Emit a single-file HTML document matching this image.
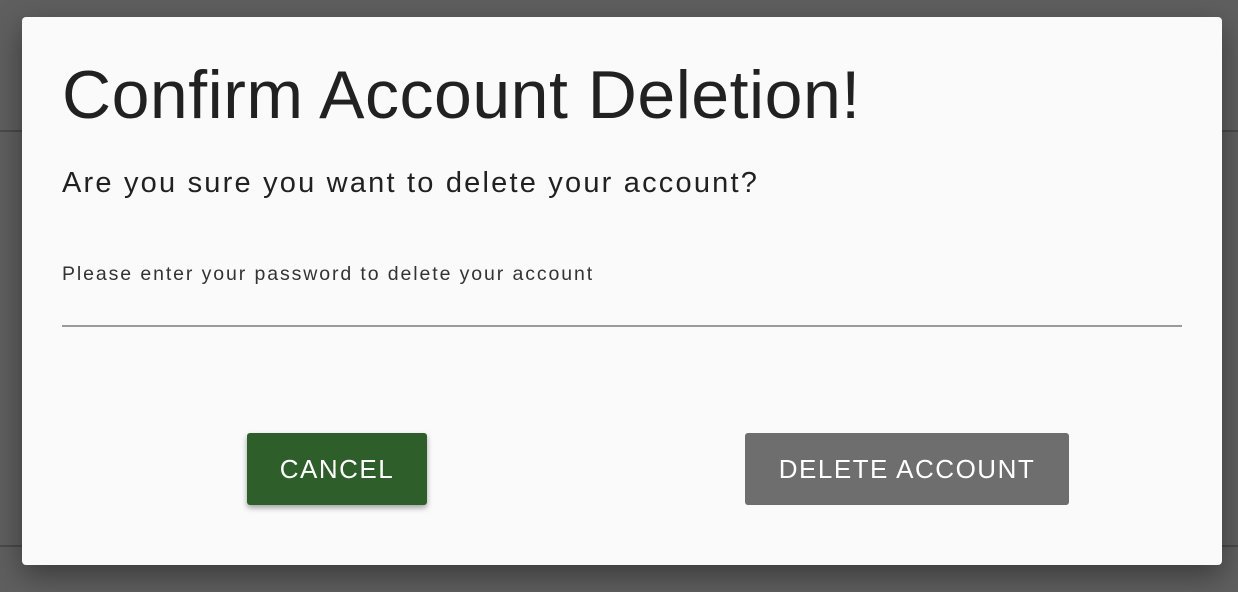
<!DOCTYPE html>
<html><head><style>
html,body{margin:0;padding:0}
body{width:1238px;height:592px;background:#5f5f5f;position:relative;overflow:hidden;font-family:"Liberation Sans",sans-serif}
.l{position:absolute;left:0;width:1238px;height:2px;background:#4a4a4a}
.d{position:absolute;left:22px;top:17px;width:1200px;height:548px;background:#fafafa;border-radius:4px;box-shadow:0 10px 30px rgba(0,0,0,.4)}
.t{position:absolute;left:40px;top:39px;font-size:68px;color:#212121;white-space:nowrap;letter-spacing:0.5px}
.s{position:absolute;left:40px;top:150px;font-size:29px;color:#212121;white-space:nowrap;letter-spacing:2.2px}
.p{position:absolute;left:40px;top:246px;font-size:19.5px;color:#333;white-space:nowrap;letter-spacing:1.9px}
.u{position:absolute;left:40px;top:308px;width:1120px;height:2px;background:#9a9a9a}
.b{position:absolute;top:416px;height:72px;color:#fff;font-size:26px;letter-spacing:1.5px;display:flex;align-items:center;justify-content:center;border-radius:3px}
</style></head><body>
<div class="l" style="top:130px"></div>
<div class="l" style="top:545px"></div>
<div class="d">
<div class="t">Confirm Account Deletion!</div>
<div class="s">Are you sure you want to delete your account?</div>
<div class="p">Please enter your password to delete your account</div>
<div class="u"></div>
<div class="b" style="left:225px;width:180px;background:#2e5e2a;box-shadow:0 3px 6px rgba(0,0,0,.35)">CANCEL</div>
<div class="b" style="left:723px;width:324px;background:#6e6e6e">DELETE ACCOUNT</div>
</div>
</body></html>
